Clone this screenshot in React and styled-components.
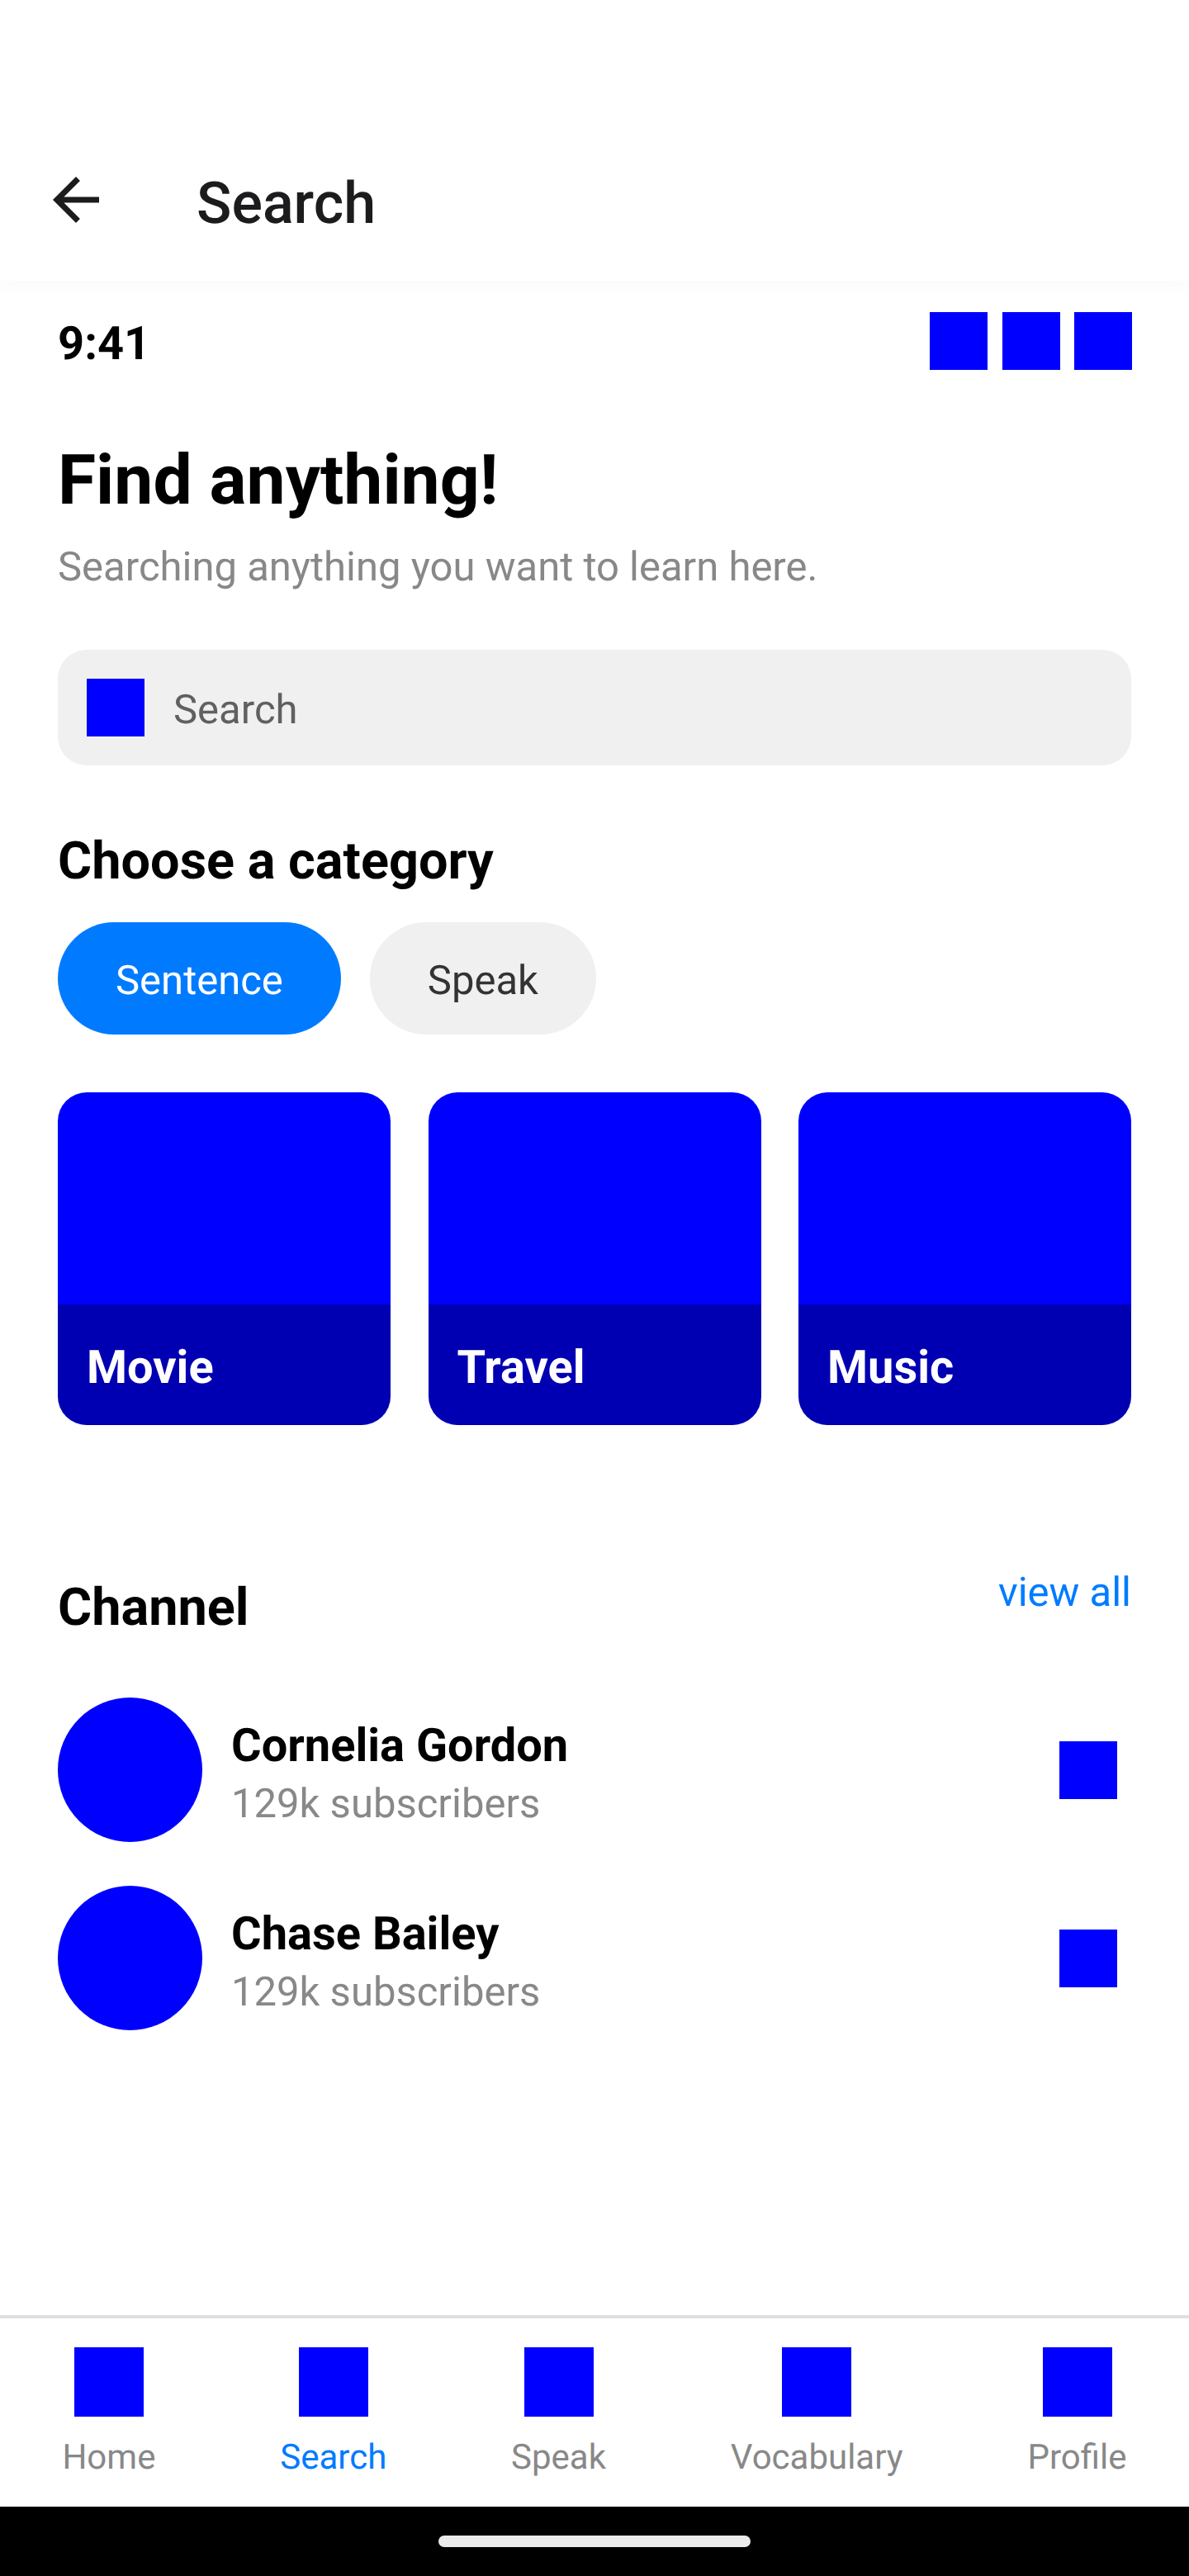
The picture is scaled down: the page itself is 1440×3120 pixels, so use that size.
import React from "react";
import styled, { createGlobalStyle, css } from "styled-components";

const GlobalStyle = createGlobalStyle`
  *, *::before, *::after { box-sizing: border-box; }
  body { margin: 0; background: #fff; }
`;

const font = {
  title: css`font-size: 84px; line-height: 103px; padding-top: 9px;`,
  heading: css`font-size: 63px; line-height: 79px; padding-top: 7px;`,
  label: css`font-size: 56px; line-height: 70px; padding-top: 6px;`,
  body: css`font-size: 49px; line-height: 61px; padding-top: 5px;`,
  caption: css`font-size: 42px; line-height: 51px; padding-top: 6px;`,
};

const Screen = styled.div`
  display: flex;
  flex-direction: column;
  width: 1440px;
  height: 3120px;
  background: #fff;
  font-family: Roboto, "Liberation Sans", sans-serif;
  color: #000;
  white-space: nowrap;
  text-rendering: geometricPrecision;
`;

const Header = styled.header`
  display: flex;
  align-items: center;
  height: 340px;
  padding: 144px 50px 0;
  gap: 104px;
  background: #fff;
  box-shadow: 0 8px 20px rgba(0, 0, 0, 0.024);
`;

const HeaderTitle = styled.h1`
  margin: 0;
  padding-top: 10px;
  font-size: 70px;
  line-height: 84px;
  font-weight: 500;
  color: #1c1c1e;
`;

const BackIcon = styled.svg`
  display: block;
  width: 84px;
  height: 84px;
  fill: #1c1c1e;
`;

const Content = styled.main`
  flex: 1;
  padding: 35px 70px 0;
`;

const Box = styled.span`
  flex: none;
  width: ${(p) => p.$size || 70}px;
  height: ${(p) => p.$size || 70}px;
  background: #00f;
`;

const StatusBar = styled.div`
  display: flex;
  justify-content: space-between;
  align-items: center;
  height: 76px;
`;

const Time = styled.span`
  ${font.label}
  font-weight: 700;
`;

const StatusIcons = styled.div`
  display: flex;
  gap: 17.5px;
  margin-right: -1px;
`;

const PageTitle = styled.h2`
  ${font.title}
  margin: 70px 0 0;
  font-weight: 700;
`;

const Subtitle = styled.p`
  ${font.body}
  margin: 18px 0 0;
  color: #888;
`;

const SearchField = styled.div`
  display: flex;
  align-items: center;
  gap: 35px;
  height: 140px;
  margin-top: 70px;
  padding: 0 35px;
  border-radius: 35px;
  background: #f0f0f0;
`;

const Placeholder = styled.span`
  ${font.body}
  color: #606060;
`;

const SectionTitle = styled.h3`
  ${font.heading}
  margin: 0;
  font-weight: 700;
`;

const CategorySection = styled.section`
  margin-top: 70px;
`;

const Chips = styled.div`
  display: flex;
  gap: 35px;
  margin-top: 34px;
`;

const Chip = styled.button`
  height: 136px;
  padding: 0 70px;
  border: 0;
  border-radius: 70px;
  font-family: inherit;
  text-rendering: inherit;
  background: ${(p) => (p.$active ? "#007bff" : "#f0f0f0")};
  color: ${(p) => (p.$active ? "#fff" : "#333")};
`;

const ChipLabel = styled.span`
  ${font.body}
  display: block;
`;

const Cards = styled.div`
  display: flex;
  justify-content: space-between;
  margin-top: 70px;
`;

const Card = styled.article`
  display: flex;
  flex-direction: column;
  justify-content: flex-end;
  width: 403px;
  height: 403px;
  border-radius: 35px;
  overflow: hidden;
  background: #00f;
`;

const CardCaption = styled.div`
  height: 146px;
  padding: 35px;
  background: rgba(0, 0, 0, 0.3);
`;

const CardLabel = styled.span`
  ${font.label}
  display: block;
  font-weight: 700;
  color: #fff;
`;

const ChannelHeader = styled.div`
  display: flex;
  justify-content: space-between;
  align-items: flex-start;
  height: 163px;
  margin-top: 167px;
`;

const ChannelTitle = styled(SectionTitle)`
  margin-top: 8px;
`;

const ViewAll = styled.a`
  ${font.body}
  color: #007bff;
`;

const ChannelList = styled.div`
  display: flex;
  flex-direction: column;
  gap: 53px;
`;

const Channel = styled.div`
  display: flex;
  align-items: center;
  height: 175px;
  padding-right: 17px;
`;

const Avatar = styled.span`
  width: 175px;
  height: 175px;
  border-radius: 50%;
  background: #00f;
`;

const ChannelText = styled.div`
  flex: 1;
  margin-left: 35px;
`;

const ChannelName = styled.div`
  ${font.label}
  font-weight: 700;
`;

const Subscribers = styled.div`
  ${font.body}
  color: #888;
`;

const TabBar = styled.nav`
  display: flex;
  justify-content: space-around;
  height: 232px;
  padding-top: 35px;
  border-top: 4px solid #e0e0e0;
`;

const Tab = styled.div`
  display: flex;
  flex-direction: column;
  align-items: center;
  gap: 18px;
  color: ${(p) => (p.$active ? "#007bff" : "#888")};
`;

const TabLabel = styled.span`
  ${font.caption}
`;

const GestureBar = styled.div`
  display: flex;
  justify-content: center;
  height: 84px;
  padding-top: 35px;
  background: #000;
`;

const GestureHandle = styled.span`
  width: 378px;
  height: 14px;
  border-radius: 7px;
  background: #ebebeb;
`;

const categories = ["Movie", "Travel", "Music"];
const channels = [
  { name: "Cornelia Gordon", subscribers: "129k subscribers" },
  { name: "Chase Bailey", subscribers: "129k subscribers" },
];
const tabs = ["Home", "Search", "Speak", "Vocabulary", "Profile"];

export default function App() {
  return (
    <Screen>
      <GlobalStyle />
      <Header>
        <BackIcon viewBox="0 0 24 24">
          <path d="M20 11H7.83l5.59-5.59L12 4l-8 8 8 8 1.41-1.41L7.83 13H20v-2z" />
        </BackIcon>
        <HeaderTitle>Search</HeaderTitle>
      </Header>
      <Content>
        <StatusBar>
          <Time>9:41</Time>
          <StatusIcons>
            <Box />
            <Box />
            <Box />
          </StatusIcons>
        </StatusBar>
        <PageTitle>Find anything!</PageTitle>
        <Subtitle>Searching anything you want to learn here.</Subtitle>
        <SearchField>
          <Box />
          <Placeholder>Search</Placeholder>
        </SearchField>
        <CategorySection>
          <SectionTitle>Choose a category</SectionTitle>
          <Chips>
            <Chip $active>
              <ChipLabel>Sentence</ChipLabel>
            </Chip>
            <Chip>
              <ChipLabel>Speak</ChipLabel>
            </Chip>
          </Chips>
          <Cards>
            {categories.map((name) => (
              <Card key={name}>
                <CardCaption>
                  <CardLabel>{name}</CardLabel>
                </CardCaption>
              </Card>
            ))}
          </Cards>
        </CategorySection>
        <ChannelHeader>
          <ChannelTitle>Channel</ChannelTitle>
          <ViewAll>view all</ViewAll>
        </ChannelHeader>
        <ChannelList>
          {channels.map((channel) => (
            <Channel key={channel.name}>
              <Avatar />
              <ChannelText>
                <ChannelName>{channel.name}</ChannelName>
                <Subscribers>{channel.subscribers}</Subscribers>
              </ChannelText>
              <Box />
            </Channel>
          ))}
        </ChannelList>
      </Content>
      <TabBar>
        {tabs.map((name) => (
          <Tab key={name} $active={name === "Search"}>
            <Box $size={84} />
            <TabLabel>{name}</TabLabel>
          </Tab>
        ))}
      </TabBar>
      <GestureBar>
        <GestureHandle />
      </GestureBar>
    </Screen>
  );
}
